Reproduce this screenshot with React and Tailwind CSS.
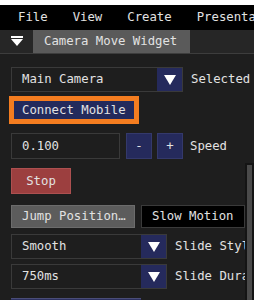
import React from "react";

const font = { fontFamily: '"DejaVu Sans Mono", "Liberation Mono", monospace' };

function Arrow() {
  return (
    <svg width="12" height="11" viewBox="0 0 12 11">
      <polygon points="0,1 12,1 6,11" fill="#ffffff" />
    </svg>
  );
}

function Combo({ value, width, label, top }) {
  return (
    <div className={`flex items-center ${top}`}>
      <div className="flex h-[25px] shrink-0 border border-[#3a3a3a]" style={{ width }}>
        <div className="flex flex-1 items-center pl-[10px]">{value}</div>
        <div className="flex w-[25px] items-center justify-center bg-[#252a5c]">
          <Arrow />
        </div>
      </div>
      <span className="ml-[8px] shrink-0 whitespace-nowrap">{label}</span>
    </div>
  );
}

export default function App() {
  return (
    <div className="relative h-[300px] w-[254px] overflow-hidden bg-[#1e1e1e] text-[12.3px] text-[#e2e2e2]" style={font}>
      <div className="h-[5px] bg-white" />
      <div className="flex h-[25px] items-center gap-[25px] overflow-hidden bg-black pl-[18px] whitespace-nowrap">
        <span>File</span>
        <span>View</span>
        <span>Create</span>
        <span>Presentation</span>
      </div>
      <div className="flex h-[24px] items-end border-b border-[#3d3d3d] bg-[#262626]">
        <div className="flex h-full w-[33px] items-center justify-center">
          <svg width="12" height="11" viewBox="0 0 12 11">
            <rect x="0" y="0" width="12" height="2" fill="#ffffff" />
            <polygon points="0,3 12,3 6,10" fill="#ffffff" />
          </svg>
        </div>
        <div className="flex h-[23px] w-[157px] items-center bg-[#5a5a5a] pl-[11px] whitespace-nowrap">
          Camera Move Widget
        </div>
      </div>

      <div className="pl-[11px] pr-[9px]">
        <Combo value="Main Camera" width={172} label="Selected" top="mt-[13px]" />

        <div className="mt-[4px] ml-[-2px] w-[130px] border-[5px] border-[#f47d20] bg-[#232a5c]">
          <div className="flex h-[18px] items-center pl-[8px] whitespace-nowrap">Connect Mobile</div>
        </div>

        <div className="mt-[9px] flex items-center">
          <div className="flex h-[26px] w-[109px] items-center border border-[#3a3a3a] pl-[10px]">0.100</div>
          <div className="ml-[6px] flex h-[26px] w-[26px] items-center justify-center border border-[#34396b] bg-[#252a5c]">-</div>
          <div className="ml-[5px] flex h-[26px] w-[26px] items-center justify-center border border-[#34396b] bg-[#252a5c]">+</div>
          <span className="ml-[7px]">Speed</span>
        </div>

        <div className="mt-[9px] flex h-[26px] w-[60px] items-center justify-center border border-[#ad5050] bg-[#9c3f3f]">
          Stop
        </div>

        <div className="mt-[11px] flex">
          <div className="flex h-[23px] w-[124px] items-center border border-[#6c6c6c] bg-[#5c5c5c] pl-[10px] whitespace-nowrap">
            Jump Position…
          </div>
          <div className="ml-[6px] flex h-[23px] w-[104px] items-center border border-[#3a3a3a] bg-black pl-[10px] whitespace-nowrap">
            Slow Motion
          </div>
        </div>

        <div className="w-[234px] overflow-hidden">
          <Combo value="Smooth" width={156} label="Slide Style" top="mt-[6px]" />
          <Combo value="750ms" width={156} label="Slide Duration" top="mt-[5px]" />
        </div>

        <div className="mt-[9px] h-[6px] w-[130px] border-t border-[#4a4d78] bg-[#2c3060]" />
      </div>

      <div className="absolute right-0 top-[163px] bottom-0 w-[9px] bg-[#141414]">
        <div className="ml-[2px] mt-[2px] h-full w-[5px] bg-[#4a4a4a]" />
      </div>
    </div>
  );
}
